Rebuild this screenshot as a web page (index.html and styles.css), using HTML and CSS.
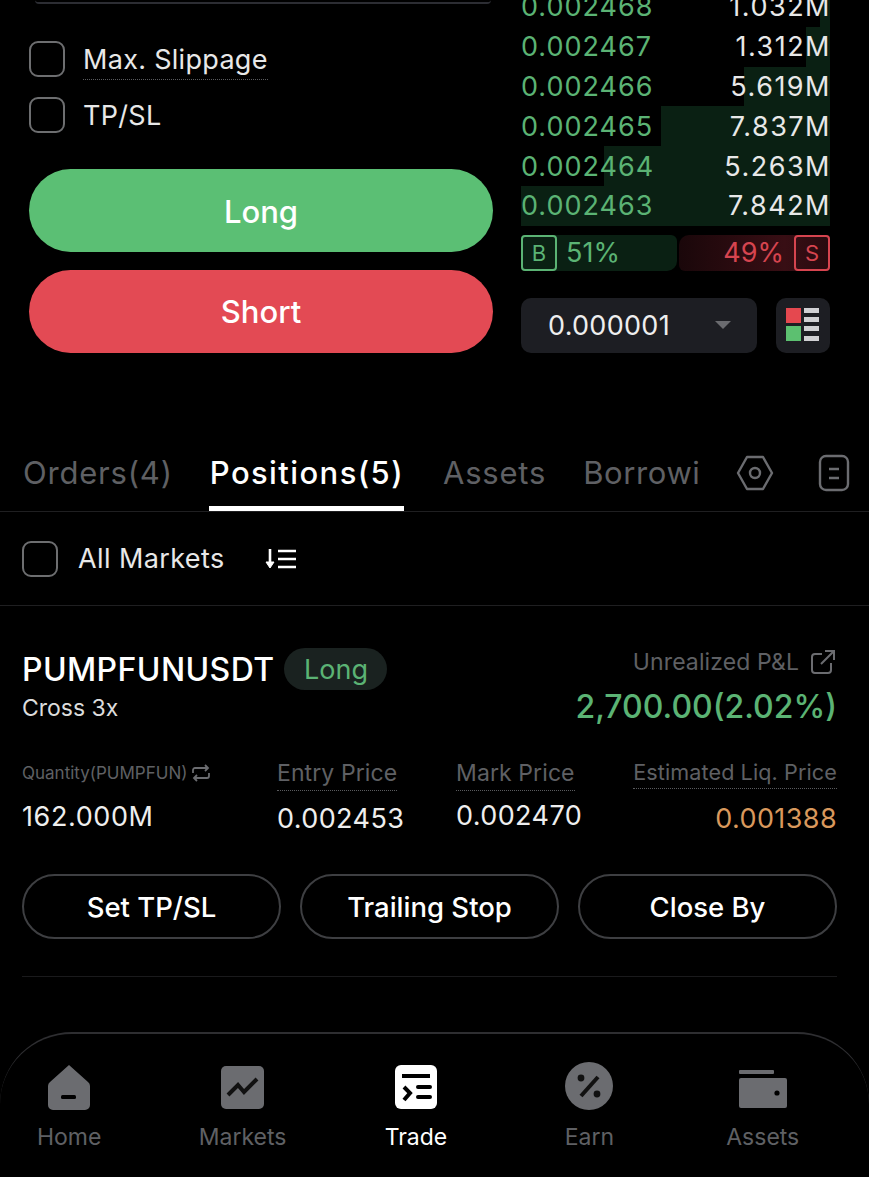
FILE: index.html
```html
<!DOCTYPE html>
<html lang="en">
  <head>
    <meta charset="UTF-8" />
    <meta name="viewport" content="width=device-width, initial-scale=1.0" />
    <title>Trade</title>
    <link rel="stylesheet" href="styles.css">
  </head>
  <body>
    <div class="page">
      <section class="trade">
        <div class="order-form">
          <div class="input-edge"></div>
          <label class="check-row first">
            <span class="check"></span>
            <span class="dotted">Max. Slippage</span>
          </label>
          <label class="check-row">
            <span class="check"></span>
            <span>TP/SL</span>
          </label>
          <button class="action long">Long</button>
          <button class="action short">Short</button>
        </div>

        <div class="book">
          <div class="book-rows">
            <div class="book-row"><i class="depth" style="width: 3.2%"></i><span class="price">0.002468</span><span class="amount">1.032M</span></div>
            <div class="book-row"><i class="depth" style="width: 7.8%"></i><span class="price">0.002467</span><span class="amount">1.312M</span></div>
            <div class="book-row"><i class="depth" style="width: 27.8%"></i><span class="price">0.002466</span><span class="amount">5.619M</span></div>
            <div class="book-row"><i class="depth" style="width: 54.7%"></i><span class="price">0.002465</span><span class="amount">7.837M</span></div>
            <div class="book-row"><i class="depth" style="width: 73%"></i><span class="price">0.002464</span><span class="amount">5.263M</span></div>
            <div class="book-row"><i class="depth" style="width: 100%"></i><span class="price">0.002463</span><span class="amount">7.842M</span></div>
          </div>

          <div class="ratio">
            <div class="ratio-buy"><span class="tag tag-b">B</span><span>51%</span></div>
            <div class="ratio-sell"><span>49%</span><span class="tag tag-s">S</span></div>
          </div>

          <div class="book-tools">
            <div class="step">
              <span>0.000001</span>
              <svg width="16" height="8" viewBox="0 0 16 8"><path d="M0 0h16L8 8z" fill="#6a6b6f"/></svg>
            </div>
            <div class="layout-btn">
              <svg width="34" height="34" viewBox="0 0 34 34">
                <rect x="0" y="0" width="15" height="15" fill="#e5484f"/>
                <rect x="0" y="18" width="15" height="15" fill="#5cc070"/>
                <rect x="18" y="0" width="15" height="5" fill="#d0d0d3"/>
                <rect x="18" y="9" width="15" height="5" fill="#d0d0d3"/>
                <rect x="18" y="18" width="15" height="5" fill="#d0d0d3"/>
                <rect x="18" y="28" width="15" height="5" fill="#d0d0d3"/>
              </svg>
            </div>
          </div>
        </div>
      </section>

      <nav class="tabs">
        <a>Orders(4)</a>
        <a class="active">Positions(5)</a>
        <a>Assets</a>
        <a class="cut">Borrowi</a>
        <svg class="tab-icon hex" width="38" height="38" viewBox="0 0 38 38" fill="none" stroke="#6b6c70" stroke-width="2.4">
          <path d="M11 3h16l9 16-9 16H11L2 19z" stroke-linejoin="round"/>
          <circle cx="19" cy="19" r="5"/>
        </svg>
        <svg class="tab-icon" width="32" height="38" viewBox="0 0 32 38" fill="none" stroke="#6b6c70" stroke-width="2.4">
          <rect x="2" y="2" width="28" height="34" rx="6"/>
          <path d="M11 15h10M11 24h10"/>
        </svg>
      </nav>

      <div class="filter">
        <span class="check"></span>
        <span class="filter-label">All Markets</span>
        <svg width="32" height="22" viewBox="0 0 32 22" fill="none" stroke="#fff" stroke-width="2.6">
          <path d="M5 1v17"/>
          <path d="M1 14l4 6 4-6z" fill="#fff" stroke-width="1"/>
          <path d="M13 3h18M13 11h18M13 19h18"/>
        </svg>
      </div>

      <article class="position">
        <div class="pos-head">
          <div>
            <div class="pos-title">
              <span class="symbol">PUMPFUNUSDT</span>
              <span class="chip">Long</span>
            </div>
            <div class="margin">Cross 3x</div>
          </div>
          <div class="pnl">
            <div class="pnl-label">
              <span>Unrealized P&amp;L</span>
              <svg width="24" height="24" viewBox="0 0 24 24" fill="none" stroke="#6b6c70" stroke-width="2">
                <path d="M11 4H4a3 3 0 0 0-3 3v13a3 3 0 0 0 3 3h13a3 3 0 0 0 3-3v-7"/>
                <path d="M10 14L23 1M14 1h9v9"/>
              </svg>
            </div>
            <div class="pnl-value">2,700.00(2.02%)</div>
          </div>
        </div>

        <div class="stats">
          <div class="stat stat-qty">
            <div class="stat-label small">Quantity(PUMPFUN)
              <svg width="18" height="18" viewBox="0 0 18 18" fill="none" stroke="#6b6c70" stroke-width="1.8">
                <path d="M1 9V6a2 2 0 0 1 2-2h13M13 1l3 3-3 3M17 9v3a2 2 0 0 1-2 2H2M5 17l-3-3 3-3"/>
              </svg>
            </div>
            <div class="stat-value">162.000M</div>
          </div>
          <div class="stat stat-entry">
            <div class="stat-label"><span class="dotted">Entry Price</span></div>
            <div class="stat-value low">0.002453</div>
          </div>
          <div class="stat stat-mark">
            <div class="stat-label"><span class="dotted">Mark Price</span></div>
            <div class="stat-value">0.002470</div>
          </div>
          <div class="stat stat-liq">
            <div class="stat-label"><span class="dotted">Estimated Liq. Price</span></div>
            <div class="stat-value low orange">0.001388</div>
          </div>
        </div>

        <div class="pos-actions">
          <button class="ghost">Set TP/SL</button>
          <button class="ghost">Trailing Stop</button>
          <button class="ghost">Close By</button>
        </div>
      </article>

      <footer class="tabbar">
        <a class="bar-item">
          <svg width="44" height="46" viewBox="0 0 44 46">
            <path d="M22 1l19 17a5 5 0 0 1 2 4v19a5 5 0 0 1-5 5H6a5 5 0 0 1-5-5V22a5 5 0 0 1 2-4z" fill="#6b6c70"/>
            <rect x="14" y="31" width="15" height="4" rx="1.5" fill="#000"/>
          </svg>
          <span>Home</span>
        </a>
        <a class="bar-item">
          <svg width="44" height="44" viewBox="0 0 44 44">
            <rect x="0" y="0" width="43" height="43" rx="5" fill="#6b6c70"/>
            <path d="M7 29l10-10 6 7L36 13" fill="none" stroke="#111" stroke-width="4"/>
          </svg>
          <span>Markets</span>
        </a>
        <a class="bar-item active">
          <svg width="44" height="46" viewBox="0 0 44 46">
            <rect x="1" y="1" width="42" height="44" rx="6" fill="#fff"/>
            <path d="M8 12h28" stroke="#000" stroke-width="4"/>
            <path d="M10 23l6 6-6 7" fill="none" stroke="#000" stroke-width="4"/>
            <path d="M24 23h12M24 33h12" stroke="#000" stroke-width="4" stroke-linecap="round"/>
          </svg>
          <span>Trade</span>
        </a>
        <a class="bar-item">
          <svg width="48" height="48" viewBox="0 0 48 48">
            <circle cx="24" cy="24" r="24" fill="#6b6c70"/>
            <path d="M33 15L16 34" stroke="#111" stroke-width="4"/>
            <circle cx="16" cy="16" r="3.4" fill="#111"/>
            <circle cx="32" cy="32" r="3.4" fill="#111"/>
          </svg>
          <span>Earn</span>
        </a>
        <a class="bar-item">
          <svg width="48" height="40" viewBox="0 0 48 40">
            <rect x="0" y="0" width="35" height="4" rx="1" fill="#6b6c70"/>
            <rect x="0" y="8" width="48" height="30" rx="2" fill="#6b6c70"/>
            <circle cx="38" cy="23" r="2.6" fill="#000"/>
          </svg>
          <span>Assets</span>
        </a>
      </footer>
    </div>
  </body>
</html>
```

FILE: styles.css
```css
* {
  box-sizing: border-box;
}

html,
body {
  margin: 0;
  background: #000;
}

body {
  font-family: Inter, "Liberation Sans", sans-serif;
  color: #fff;
}

.page {
  width: 869px;
  height: 1177px;
  overflow: hidden;
}

button {
  font-family: inherit;
  cursor: pointer;
}

/* top: order form + book */
.trade {
  display: flex;
  justify-content: space-between;
  height: 440px;
  padding-left: 29px;
  padding-right: 39px;
}

.order-form {
  width: 464px;
}

.input-edge {
  height: 4px;
  margin: 0 2px 0 6px;
  border-bottom: 2px solid #2c2d33;
  border-radius: 0 0 12px 12px;
}

.check-row {
  display: flex;
  align-items: center;
  gap: 18px;
  height: 36px;
  margin-bottom: 20px;
  font-size: 27px;
  letter-spacing: 0.3px;
  color: #e8e8e8;
}

.check-row.first {
  margin-top: 37px;
}

.check-row.first .dotted {
  margin-top: 4px;
}

.check {
  flex: none;
  width: 36px;
  height: 36px;
  border: 2px solid #6d6e70;
  border-radius: 9px;
}

.dotted {
  padding-bottom: 3px;
  border-bottom: 1px dotted #5a5b5e;
}

.action {
  display: block;
  width: 100%;
  height: 83px;
  border: none;
  border-radius: 42px;
  color: #fff;
  font-size: 31px;
  font-weight: 500;
}

.long {
  margin-top: 36px;
  padding-top: 3px;
  background: #5bbf74;
}

.short {
  margin-top: 18px;
  background: #e34a54;
}

.book {
  width: 309px;
  margin-top: -13px;
}

.book-row {
  position: relative;
  display: flex;
  justify-content: space-between;
  align-items: center;
  height: 39.8px;
  font-size: 27px;
}

.depth {
  position: absolute;
  top: 0;
  right: 0;
  bottom: 0;
  background: #0a2013;
}

.price,
.amount {
  position: relative;
}

.price {
  color: #5bb374;
  letter-spacing: 1px;
}

.amount {
  margin-right: -1px;
  color: #e8e8e8;
  letter-spacing: 1.5px;
}

.ratio {
  display: flex;
  justify-content: space-between;
  height: 36px;
  margin-top: 9px;
  font-size: 27px;
}

.ratio-buy,
.ratio-sell {
  display: flex;
  align-items: center;
  gap: 9px;
  width: 156px;
}

.ratio-buy {
  border-radius: 4px 6px 10px 4px;
  background: #0a2013;
  color: #5bb374;
}

.ratio-sell {
  justify-content: flex-end;
  gap: 10px;
  width: 151px;
  border-radius: 10px 4px 4px 6px;
  background: linear-gradient(90deg, #1a070a, #380e14 70%, #280a0f);
  color: #d6444f;
}

.tag {
  display: flex;
  align-items: center;
  justify-content: center;
  width: 36px;
  height: 36px;
  border: 2px solid;
  border-radius: 4px;
  font-size: 22px;
}

.book-tools {
  display: flex;
  justify-content: space-between;
  margin-top: 27px;
}

.step {
  display: flex;
  align-items: center;
  justify-content: space-between;
  width: 236px;
  height: 55px;
  padding: 0 26px 0 27px;
  border-radius: 10px;
  background: #1d1e23;
  font-size: 27px;
  letter-spacing: 0.3px;
  color: #eee;
}

.layout-btn {
  display: flex;
  align-items: center;
  justify-content: center;
  width: 54px;
  height: 55px;
  border-radius: 10px;
  background: #1d1e23;
}

/* tabs */
.tabs {
  display: flex;
  align-items: center;
  height: 72px;
  padding: 0 0 6px 23px;
  border-bottom: 1px solid #1f1f21;
  font-size: 31px;
  color: #5f6064;
}

.tabs a {
  position: relative;
  margin-right: 37px;
  line-height: 40px;
  letter-spacing: 0.8px;
}

.tabs a.active {
  margin-right: 39px;
  color: #fff;
  font-weight: 500;
  letter-spacing: 1.4px;
}

.tabs a.active::after {
  content: "";
  position: absolute;
  left: -1px;
  right: 0;
  bottom: -18px;
  height: 5px;
  background: #fff;
}

.tabs a.cut {
  width: 115px;
  margin-right: 38px;
  letter-spacing: 0.6px;
  white-space: nowrap;
}

.tab-icon {
  flex: none;
}

.hex {
  margin-right: 44px;
}

/* filter row */
.filter {
  display: flex;
  align-items: center;
  height: 94px;
  padding-left: 22px;
  border-bottom: 1px solid #1f1f21;
}

.filter-label {
  margin: 0 40px 0 20px;
  font-size: 27px;
  letter-spacing: 0.4px;
  color: #e8e8e8;
}

/* position card */
.position {
  margin: 0 32px 0 22px;
  padding-top: 42px;
  height: 371px;
  border-bottom: 1px solid #1a1a1c;
}

.pos-head {
  display: flex;
  justify-content: space-between;
  height: 98px;
}

.pos-title {
  display: flex;
  align-items: center;
  gap: 10px;
}

.symbol {
  font-size: 32px;
  font-weight: 500;
  letter-spacing: 0.4px;
}

.chip {
  display: flex;
  align-items: center;
  justify-content: center;
  width: 103px;
  height: 42px;
  border-radius: 21px;
  background: #1a2220;
  color: #5bb374;
  font-size: 27px;
}

.margin {
  margin-top: 4px;
  font-size: 23px;
  color: #dcdcdc;
}

.pnl {
  text-align: right;
}

.pnl-label {
  display: flex;
  align-items: center;
  justify-content: flex-end;
  gap: 12px;
  padding-right: 2px;
  font-size: 23px;
  letter-spacing: 0.1px;
  color: #5f6064;
}

.pnl-value {
  margin-top: 11px;
  font-size: 32px;
  font-weight: 500;
  color: #5bb374;
}

.stats {
  display: flex;
  margin-top: 13px;
}

.stat-qty {
  flex: none;
  width: 255px;
}

.stat-entry {
  flex: none;
  width: 179px;
}

.stat-mark {
  flex: none;
  width: 177px;
}

.stat-liq {
  flex: 1;
  min-width: 0;
  text-align: right;
}

.stat-label {
  height: 34px;
  font-size: 23px;
  letter-spacing: 0.1px;
  white-space: nowrap;
  color: #5f6064;
}

.stat-liq .stat-label {
  font-size: 21.6px;
}

.stat-label.small {
  display: flex;
  align-items: center;
  gap: 5px;
  height: 28px;
  margin-bottom: 6px;
  font-size: 17px;
  letter-spacing: 0;
}

.stat-value {
  margin-top: 6px;
  font-size: 27px;
  letter-spacing: 0.4px;
  color: #eee;
}

.stat-qty .stat-value {
  margin-top: 13px;
  letter-spacing: 0.6px;
}

.stat-value.low {
  margin-top: 9px;
}

.orange {
  color: #d9985c;
}

.pos-actions {
  display: flex;
  gap: 19px;
  margin-top: 39px;
}

.ghost {
  flex: 1;
  height: 65px;
  border: 2px solid #3e3f42;
  border-radius: 33px;
  background: none;
  color: #fff;
  font-size: 27.5px;
  font-weight: 500;
}

/* bottom bar */
.tabbar {
  display: flex;
  height: 146px;
  margin-top: 55px;
  padding-top: 26px;
  border-top: 2px solid #2e2e31;
  border-radius: 72px 72px 0 0;
}

.bar-item {
  display: flex;
  flex-direction: column;
  align-items: center;
  justify-content: flex-end;
  width: 173.4px;
  height: 91px;
  font-size: 23px;
  color: #5f6064;
}

.bar-item svg {
  margin-bottom: 13px;
}

.tabbar .bar-item:first-child {
  margin-left: -17.5px;
}

.bar-item.active {
  color: #fff;
}
```
